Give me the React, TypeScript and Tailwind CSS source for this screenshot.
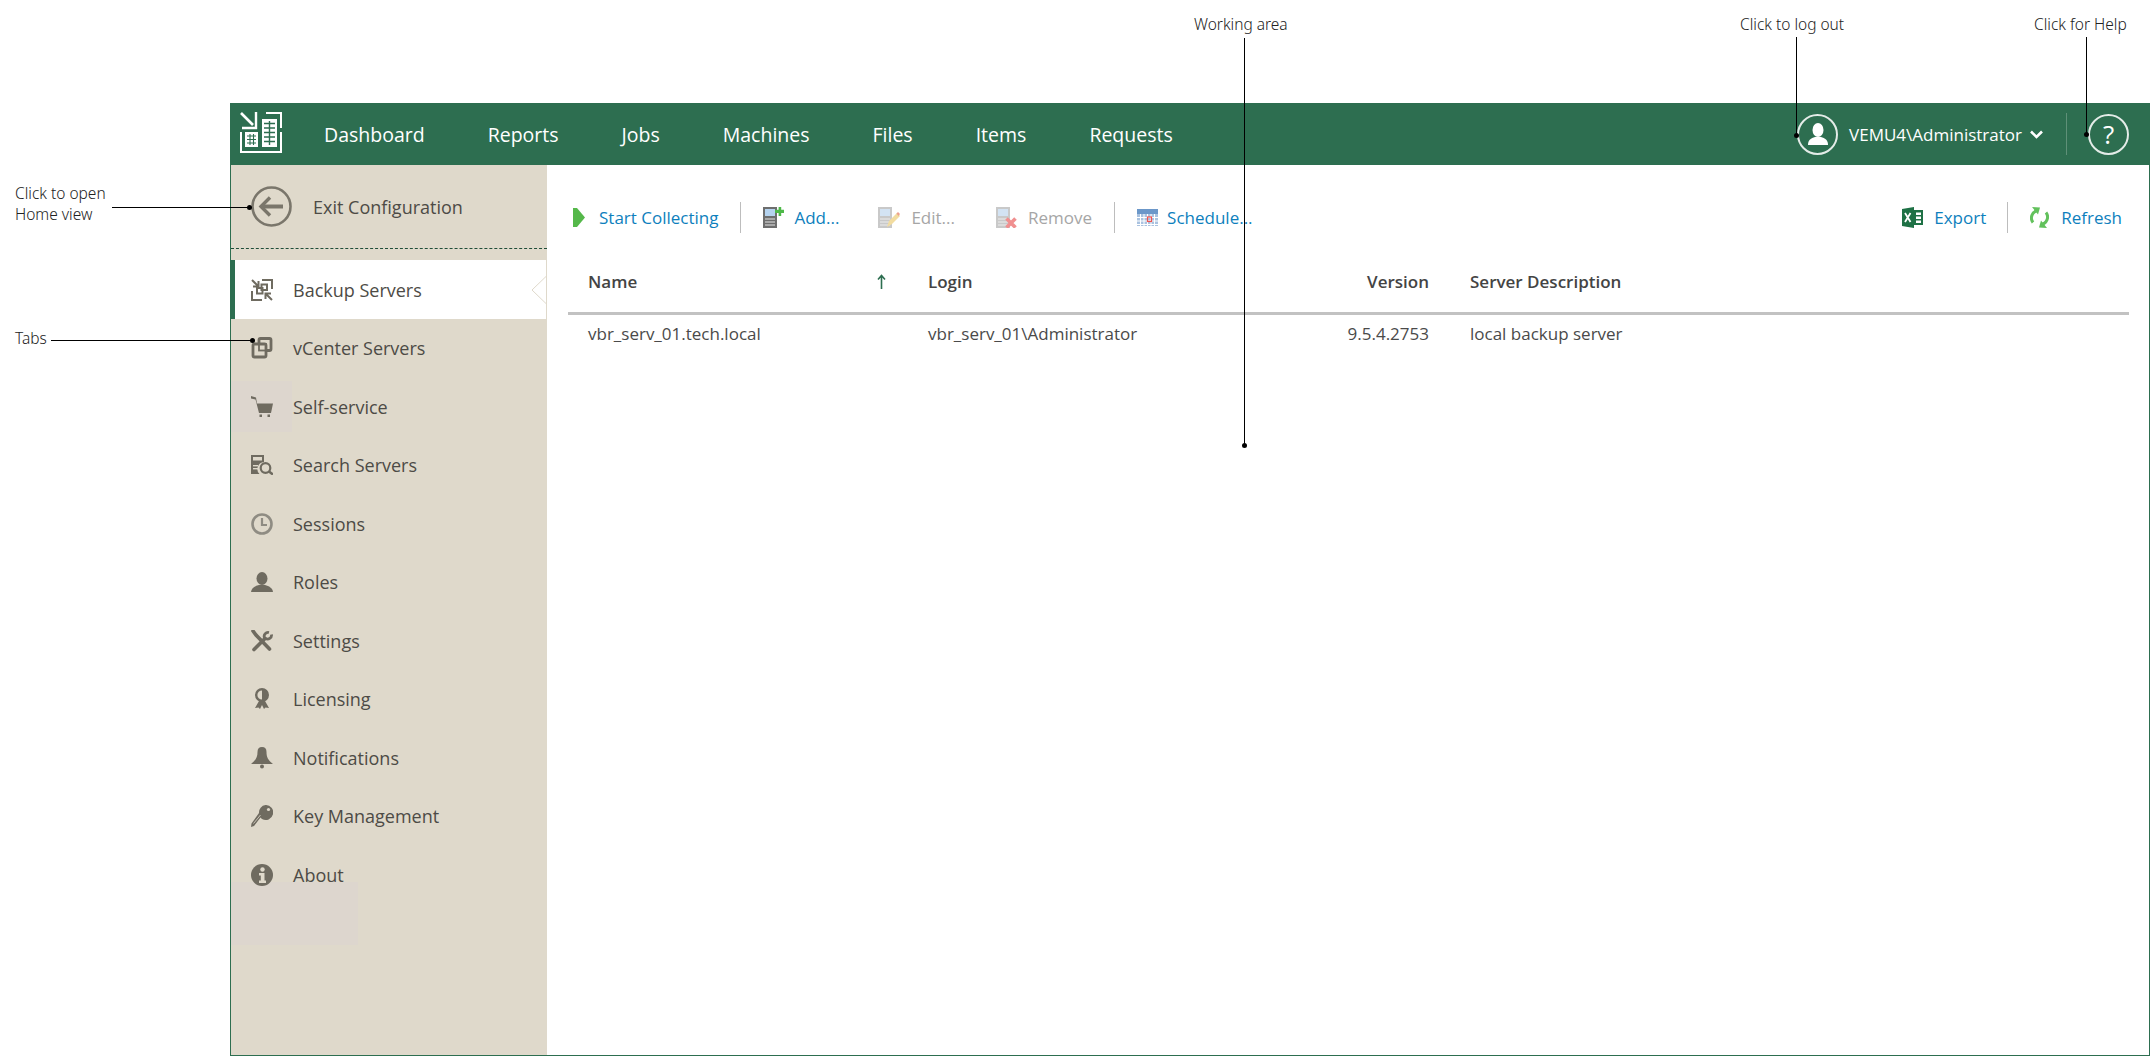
import React from "react";

const GREEN = "#2d6e50";

// callouts drawn over the page
const Dot: React.FC<{ className: string }> = ({ className }) => (
  <span className={`absolute w-[5px] h-[5px] rounded-full bg-black ${className}`} />
);

const LogoIcon = () => (
  <svg width="42" height="41" viewBox="0 0 42 41" fill="none" stroke="#fff" strokeWidth="2">
    <path d="M1 1 L13 13" strokeWidth="2.6" />
    <path d="M16 0 V16 H2" strokeWidth="2.4" />
    <path d="M26 1 H41 V16 M41 20 V40 H1 V20" />
    <rect x="22" y="7" width="15" height="28" fill="#fff" stroke="none" />
    <path d="M24 11.5h11M24 16h11M24 20.5h11M24 25h11M24 29.5h11M29.5 9v24" stroke={GREEN} strokeWidth="1.4" />
    <rect x="5" y="20" width="13" height="15" fill="#fff" stroke="none" />
    <path d="M7 24h9M7 27.500h9M7 31h9M10 22v11M13.500 22v11" stroke={GREEN} strokeWidth="1.1" />
  </svg>
);

const ExitIcon = () => (
  <svg width="41" height="41" viewBox="0 0 41 41" fill="none" stroke="#7a766b">
    <circle cx="20.500" cy="20.500" r="19" strokeWidth="2.6" />
    <path d="M10 20.500 H32" strokeWidth="4" />
    <path d="M19 11.500 L10 20.500 L19 29.500" strokeWidth="3.400" />
  </svg>
);

const ICON = "#6f6b60";

const BackupIcon = () => (
  <svg width="22" height="22" viewBox="0 0 22 22" fill="none" stroke={ICON} strokeWidth="2">
    <path d="M1 1l6 6M7.500 2v5.500H2M21 21l-6-6M14.500 20v-5.500H20" />
    <path d="M11 1h10v9M1 12v9h10" />
    <rect x="6" y="9" width="5.500" height="5.500" />
    <rect x="10.500" y="5.500" width="5.500" height="5.500" />
  </svg>
);
const VCenterIcon = () => (
  <svg width="22" height="22" viewBox="0 0 22 22" fill="none" stroke={ICON} strokeWidth="2.800">
    <path d="M8 7V3a1.500 1.500 0 0 1 1.500-1.500h9A1.500 1.500 0 0 1 20 3v9a1.500 1.500 0 0 1-1.500 1.500H15" />
    <path d="M2 8.500A1.500 1.500 0 0 1 3.500 7H13.500A1.500 1.500 0 0 1 15 8.500v10a1.500 1.500 0 0 1-1.500 1.500h-10A1.500 1.500 0 0 1 2 18.500z" />
    <rect x="8" y="7" width="7" height="6.500" strokeWidth="1.800" />
  </svg>
);
const CartIcon = () => (
  <svg width="22" height="21" viewBox="0 0 22 21" fill={ICON}>
    <path d="M0 0l5 1.500 1 6h16l-2 9.500H8L4.500 3.500 0 2.500z" />
    <rect x="8.500" y="18.500" width="2.500" height="2.500" />
    <rect x="16.500" y="18.500" width="2.500" height="2.500" />
  </svg>
);
const SearchServerIcon = () => (
  <svg width="22" height="20" viewBox="0 0 22 20">
    <path d="M0 0h13v7a7 7 0 0 0-4.500 12H0z" fill={ICON} />
    <rect x="2" y="2" width="9" height="3.500" fill="#dfd9cb" />
    <rect x="2" y="10" width="5" height="1.400" fill="#dfd9cb" />
    <rect x="2" y="13" width="5" height="1.400" fill="#dfd9cb" />
    <circle cx="14.500" cy="13" r="4.800" fill="none" stroke={ICON} strokeWidth="2.200" />
    <path d="M18 16.500l4 3" stroke={ICON} strokeWidth="2.600" />
  </svg>
);
const ClockIcon = () => (
  <svg width="22" height="22" viewBox="0 0 22 22" fill="none" stroke="#8f8c83">
    <circle cx="11" cy="11" r="9.500" strokeWidth="2.600" />
    <path d="M11 5v7h5" strokeWidth="2.200" />
  </svg>
);
const RoleIcon = () => (
  <svg width="22" height="20" viewBox="0 0 22 20" fill={ICON}>
    <ellipse cx="11" cy="6.500" rx="5.500" ry="6.500" />
    <path d="M0 20c.500-4 4-6 8-7h6c4 1 7.500 3 8 7z" />
  </svg>
);
const ToolsIcon = () => (
  <svg width="22" height="22" viewBox="0 0 22 22" fill="none" stroke={ICON}>
    <path d="M2 1l3 4 13.500 14" strokeWidth="3.600" strokeLinecap="round" />
    <path d="M3 19.500L14 8.500" strokeWidth="3.600" strokeLinecap="round" />
    <path d="M20.500 4.500a4 4 0 0 1-6 4M13.500 8a4 4 0 0 1 4.500-5.500" strokeWidth="2.800" />
  </svg>
);
const LicenseIcon = () => (
  <svg width="16" height="22" viewBox="0 0 16 22">
    <circle cx="8" cy="7" r="5.800" fill="none" stroke={ICON} strokeWidth="2.400" />
    <path d="M8 1a6 6 0 0 1 0 12z" fill={ICON} />
    <path d="M5 13l-4 7 3.500-.5 1.500 1.500 2-4 2 4 1.500-1.500 3.500.5-4-7H8z" fill={ICON} />
  </svg>
);
const BellIcon = () => (
  <svg width="22" height="22" viewBox="0 0 22 22" fill={ICON}>
    <path d="M11 0c3 0 4.500 1.500 4.500 5 0 5 1.500 8 6.500 12H0c5-4 6.500-7 6.500-12C6.500 1.500 8 0 11 0z" />
    <circle cx="11" cy="19.500" r="2" />
  </svg>
);
const KeyIcon = () => (
  <svg width="22" height="22" viewBox="0 0 22 22" fill={ICON}>
    <path d="M14.500 0a7.500 7.500 0 1 1-3.500 14l-1.500-1.500L3 21l-3 1 .500-3.500L8 8A7.500 7.500 0 0 1 14.500 0z" />
    <circle cx="17.500" cy="4.500" r="1.600" fill="#dfd9cb" />
    <path d="M2.500 18.500L9.500 10" stroke="#dfd9cb" strokeWidth=".800" />
  </svg>
);
const InfoIcon = () => (
  <svg width="22" height="22" viewBox="0 0 22 22">
    <circle cx="11" cy="11" r="11" fill={ICON} />
    <circle cx="11.500" cy="5.500" r="2.200" fill="#dfd9cb" />
    <path d="M8 9h5.500v7.500H15V19H8v-2.500h1.800V11.500H8z" fill="#dfd9cb" />
  </svg>
);

const PlayIcon = () => (
  <svg width="12" height="19" viewBox="0 0 12 19"><path d="M0 0h4l8 9.500L4 19H0z" fill="#55b84a" /></svg>
);
const ServerBase = ({ faded }: { faded?: boolean }) => (
  <>
    <rect x="0" y="0" width="14" height="21" fill={faded ? "#c9c9c9" : "#6e6e6e"} />
    <rect x="2" y="2" width="10" height="7" fill={faded ? "#d3e3f3" : "#b5d3ef"} />
    <path d="M2 12h10M2 15h10M2 18h10" stroke={faded ? "#eee" : "#e6e6e6"} strokeWidth="1.200" />
  </>
);
const AddIcon = () => (
  <svg width="21" height="21" viewBox="0 0 21 21">
    <ServerBase />
    <rect x="14" y="3" width="7" height="3.600" fill="#fff" />
    <path d="M12 2.800h3.600V0h2.600v2.800H21v3.200h-2.800V9h-2.600V6h-3.600z" fill="#4db848" />
  </svg>
);
const EditIcon = () => (
  <svg width="22" height="21" viewBox="0 0 22 21">
    <ServerBase faded />
    <path d="M9 20l2-6 8-8 3 3-8 8z" fill="#f2dca0" />
    <path d="M18.500 6.500l1.500-1.500 2 2-1.500 2z" fill="#eda18e" />
  </svg>
);
const RemoveIcon = () => (
  <svg width="21" height="21" viewBox="0 0 21 21">
    <ServerBase faded />
    <path d="M10.500 11.500l9 9M19.500 11.500l-9 9" stroke="#f08f8f" strokeWidth="3.600" />
  </svg>
);
const ScheduleIcon = () => (
  <svg width="21" height="17" viewBox="0 0 21 17">
    <rect width="21" height="5" fill="#6b97c9" />
    <rect y="5" width="21" height="12" fill="#a9c2e0" />
    <path d="M3.500 5v12M7 5v12M10.500 5v12M14 5v12M17.500 5v12M0 8.500h21M0 12h21M0 15.500h21" stroke="#fff" strokeWidth="1" />
    <rect x="10.500" y="8" width="4" height="4.500" fill="none" stroke="#f0524f" strokeWidth="1.200" />
  </svg>
);
const ExcelIcon = () => (
  <svg width="21" height="21" viewBox="0 0 21 21">
    <path d="M0 2l12-2v21L0 19z" fill="#1e7145" />
    <path d="M3 6l5.500 9M8.500 6L3 15" stroke="#fff" strokeWidth="1.800" />
    <path d="M12 3h9v15h-9z" fill="#1e7145" />
    <path d="M14 5.500h5v2.500h-5zM14 9.500h5V12h-5zM14 13.500h5V16h-5z" fill="#fff" />
  </svg>
);
const RefreshIcon = () => (
  <svg width="19" height="21" viewBox="0 0 19 21" fill="none" stroke="#62c15c" strokeWidth="3">
    <path d="M3 15.500A7.500 7.500 0 0 1 8 3.500" />
    <path d="M2 0l8 .5-2 7z" fill="#62c15c" stroke="none" />
    <path d="M16 5.500A7.500 7.500 0 0 1 11 17.500" />
    <path d="M17 21l-8-.5 2-7z" fill="#62c15c" stroke="none" />
  </svg>
);

const navItems = ["Dashboard", "Reports", "Jobs", "Machines", "Files", "Items", "Requests"];

const tabs: { label: string; icon: React.ReactNode; active?: boolean }[] = [
  { label: "Backup Servers", icon: <BackupIcon />, active: true },
  { label: "vCenter Servers", icon: <VCenterIcon /> },
  { label: "Self-service", icon: <CartIcon /> },
  { label: "Search Servers", icon: <SearchServerIcon /> },
  { label: "Sessions", icon: <ClockIcon /> },
  { label: "Roles", icon: <RoleIcon /> },
  { label: "Settings", icon: <ToolsIcon /> },
  { label: "Licensing", icon: <LicenseIcon /> },
  { label: "Notifications", icon: <BellIcon /> },
  { label: "Key Management", icon: <KeyIcon /> },
  { label: "About", icon: <InfoIcon /> },
];

const ToolButton: React.FC<{ icon: React.ReactNode; label: string; disabled?: boolean; iconW: string; className?: string }> = ({
  icon, label, disabled, iconW, className = "",
}) => (
  <div className={`flex items-center ${className}`}>
    <span className={`flex items-center justify-center shrink-0 ${iconW}`}>{icon}</span>
    <span className={`text-[17px] leading-none ${disabled ? "text-[#a6a6a6]" : "text-[#0e7fbd]"}`}>{label}</span>
  </div>
);

const Sep: React.FC<{ className: string }> = ({ className }) => (
  <span className={`w-px h-[31px] bg-[#bdbdbd] shrink-0 ${className}`} />
);

export default function App() {
  return (
    <div className="relative w-[2150px] h-[1056px] bg-white overflow-hidden font-['Open_Sans',sans-serif] pt-[103px] pl-[230px]">
      <div className="h-full flex flex-col border-r border-b border-l border-[#2d6e50]">
        {/* Top bar */}
        <header className="h-[62px] shrink-0 -ml-px -mr-px bg-[#2d6e50] flex items-center text-white">
          <div className="ml-[10px] mr-[42px] -mt-[3px] flex"><LogoIcon /></div>
          <nav className="flex gap-[63px] text-[19.500px] leading-none mt-[1px]">
            {navItems.map((n) => <span key={n}>{n}</span>)}
          </nav>
          <div className="ml-auto flex items-center">
            <span className="w-[41px] h-[41px] rounded-full border-2 border-[#e4ece8] flex items-center justify-center">
              <svg width="20" height="22" viewBox="0 0 20 22" fill="#fff">
                <ellipse cx="10" cy="7" rx="5.500" ry="7" />
                <path d="M0 22c0-5 3-7 7-8h6c4 1 7 3 7 8z" />
              </svg>
            </span>
            <span className="ml-[11px] text-[17px] leading-none">VEMU4\Administrator</span>
            <svg className="ml-[8px]" width="13" height="9" viewBox="0 0 13 9" fill="none" stroke="#fff" strokeWidth="2.600"><path d="M1 1.500l5.500 5.500L12 1.500" /></svg>
            <span className="ml-[23px] w-px h-[42px] bg-[#5f9078]" />
            <span className="ml-[21px] mr-[21px] w-[41px] h-[41px] rounded-full border-2 border-[#e4ece8] flex items-center justify-center text-[26px] leading-none">?</span>
          </div>
        </header>

        <div className="flex-1 flex min-h-0">
          {/* Sidebar */}
          <aside className="relative w-[316px] shrink-0 bg-[#dfd9cb] flex flex-col text-[18px] text-[#4d4b46]">
            <div className="absolute left-0 top-[216px] w-[61px] h-[51px] bg-[#ddd6ce]" />
            <div className="absolute left-0 top-[717px] w-[127px] h-[63px] bg-[#ddd6ce]" />
            <div className="h-[84px] flex items-center pl-[20px] shrink-0 border-b border-dashed border-[#1f4d38]">
              <ExitIcon />
              <span className="ml-[21px] leading-none">Exit Configuration</span>
            </div>
            <div className="pt-[11px] relative flex flex-col">
              {tabs.map((t) => (
                <div
                  key={t.label}
                  className={`relative flex items-center ${t.active ? "h-[59px] mb-0 bg-white mr-px -ml-px border-l-[5px] border-[#2d6e50] pl-[16px]" : "h-[58.500px] pl-[20px]"}`}
                >
                  <span className="w-[22px] flex justify-center shrink-0">{t.icon}</span>
                  <span className="ml-[20px] leading-none">{t.label}</span>
                  {t.active && (
                    <svg className="absolute right-[-1px] top-[16px]" width="16" height="28" viewBox="0 0 16 28" fill="none" stroke="#dfd9cb">
                      <path d="M15.500 0L1 14l14.500 14" />
                    </svg>
                  )}
                </div>
              ))}
            </div>
          </aside>

          {/* Working area */}
          <main className="flex-1 min-w-0 flex flex-col pl-[21px] pr-[20px]">
            <div className="h-[90px] shrink-0 flex items-center pt-[14px] -ml-[21px] -mr-[20px] pl-[26px] pr-[27px]">
              <ToolButton icon={<PlayIcon />} label="Start Collecting" iconW="w-[12px] mr-[14px]" />
              <Sep className="ml-[22px]" />
              <ToolButton icon={<AddIcon />} label="Add..." iconW="w-[21px] mr-[10px]" className="ml-[22px]" />
              <ToolButton icon={<EditIcon />} label="Edit..." disabled iconW="w-[22px] mr-[11px]" className="ml-[39px]" />
              <ToolButton icon={<RemoveIcon />} label="Remove" disabled iconW="w-[21px] mr-[11px]" className="ml-[41px]" />
              <Sep className="ml-[22px]" />
              <ToolButton icon={<ScheduleIcon />} label="Schedule..." iconW="w-[21px] mr-[9px]" className="ml-[22px]" />
              <div className="ml-auto flex items-center">
                <ToolButton icon={<ExcelIcon />} label="Export" iconW="w-[21px] mr-[11px]" />
                <Sep className="ml-[21px]" />
                <ToolButton icon={<RefreshIcon />} label="Refresh" iconW="w-[19px] mr-[12px]" className="ml-[22px]" />
              </div>
            </div>
            <div className="grid grid-cols-[340px_359px_182px_1fr] h-[60px] items-center pb-[5px] border-b-[3px] border-[#c2c2c2] text-[17px] font-semibold leading-none text-[#444]">
              <div className="pl-[20px] flex items-center justify-between pr-[22px]">
                <span>Name</span>
                <svg width="9" height="15" viewBox="0 0 9 15" fill="none" stroke="#2d6e50" strokeWidth="1.600"><path d="M4.500 15V2M1 5.500l3.500-4 3.500 4" /></svg>
              </div>
              <div className="pl-[20px]">Login</div>
              <div className="text-right pr-[20px]">Version</div>
              <div className="pl-[21px]">Server Description</div>
            </div>
            <div className="grid grid-cols-[340px_359px_182px_1fr] h-[36px] items-center text-[17px] leading-none text-[#4a4a4a]">
              <div className="pl-[20px]">vbr_serv_01.tech.local</div>
              <div className="pl-[20px]">vbr_serv_01\Administrator</div>
              <div className="text-right pr-[20px]">9.5.4.2753</div>
              <div className="pl-[21px]">local backup server</div>
            </div>
          </main>
        </div>
      </div>

      {/* Callouts */}
      <div className="absolute inset-0 pointer-events-none font-['Noto_Sans',sans-serif] font-light text-[15.500px] leading-none text-[#222]">
        <span className="absolute left-[1194px] top-[17px]">Working area</span>
        <span className="absolute left-[1244px] top-[38px] w-px h-[407px] bg-black" />
        <Dot className="left-[1242px] top-[443px]" />

        <span className="absolute left-[1740px] top-[17px]">Click to log out</span>
        <span className="absolute left-[1796px] top-[37px] w-px h-[98px] bg-black" />
        <Dot className="left-[1794px] top-[133px]" />

        <span className="absolute left-[2034px] top-[17px]">Click for Help</span>
        <span className="absolute left-[2086px] top-[37px] w-px h-[97px] bg-black" />
        <Dot className="left-[2084px] top-[132px]" />

        <span className="absolute left-[15px] top-[186px]">Click to open</span>
        <span className="absolute left-[15px] top-[207px]">Home view</span>
        <span className="absolute left-[112px] top-[207px] h-px w-[137px] bg-black" />
        <Dot className="left-[247px] top-[205px]" />

        <span className="absolute left-[15px] top-[331px]">Tabs</span>
        <span className="absolute left-[51px] top-[340px] h-px w-[201px] bg-black" />
        <Dot className="left-[250px] top-[338px]" />
      </div>
    </div>
  );
}
